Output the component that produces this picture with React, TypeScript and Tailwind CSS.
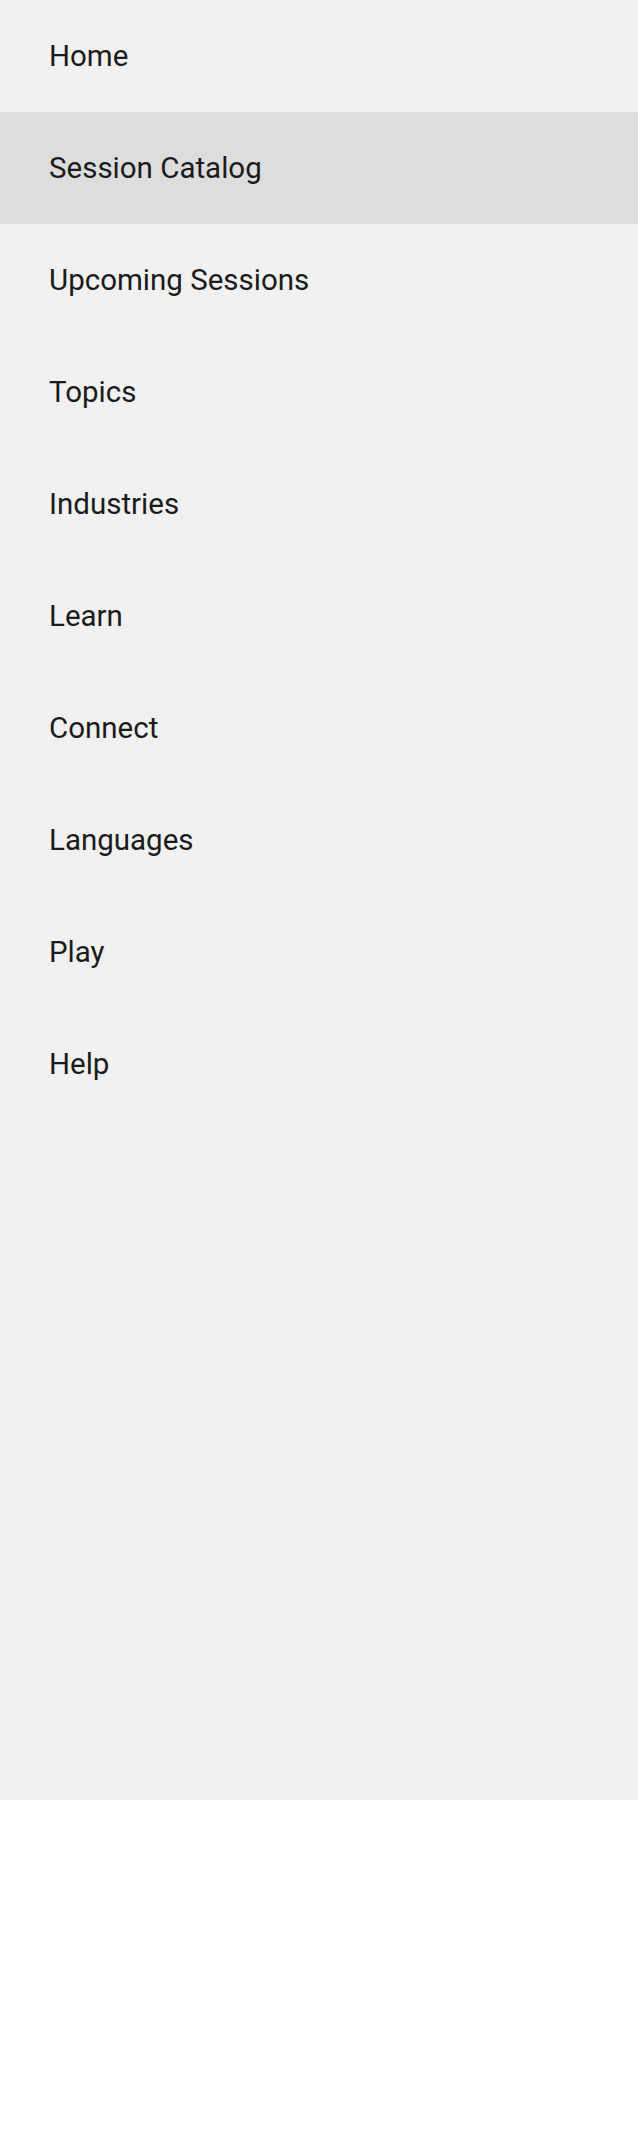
const items = [
  "Home",
  "Session Catalog",
  "Upcoming Sessions",
  "Topics",
  "Industries",
  "Learn",
  "Connect",
  "Languages",
  "Play",
  "Help",
];

export default function App() {
  const active = "Session Catalog";

  return (
    <div className="min-h-[2152px] w-full bg-white font-['Roboto',sans-serif] text-[#1b1b1b]">
      <nav className="flex h-[1800px] flex-col bg-[#f1f1f1]">
        {items.map((item) => (
          <a
            key={item}
            href="#"
            className={`flex h-[112px] shrink-0 items-center pl-[49px] pt-[2px] text-[29.5px] leading-none ${item === active ? "bg-[#dddddd]" : ""}`}
          >
            {item}
          </a>
        ))}
      </nav>
    </div>
  );
}
